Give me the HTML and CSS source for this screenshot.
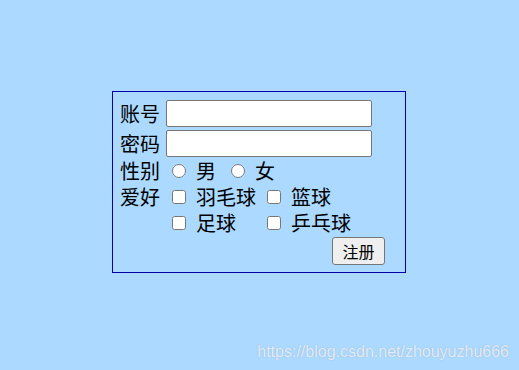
FILE: index.html
```html
<!DOCTYPE html>
<html lang="zh-CN">
<head>
  <meta charset="UTF-8">
  <meta name="viewport" content="width=device-width, initial-scale=1.0">
  <title>注册</title>
  <link rel="stylesheet" href="styles.css">
</head>
<body>
<form class="register-box">
  <div class="row field-row">
    <label class="row-label" for="account">账号</label>
    <input class="text-input" type="text" id="account">
  </div>
  <div class="row field-row">
    <label class="row-label" for="password">密码</label>
    <input class="text-input" type="password" id="password">
  </div>
  <div class="row choice-row first-choice">
    <span class="row-label">性别</span>
    <div class="radio-group">
      <label class="option"><input type="radio" name="sex"><span>男</span></label>
      <label class="option"><input type="radio" name="sex"><span>女</span></label>
    </div>
  </div>
  <div class="row hobby-row">
    <span class="row-label">爱好</span>
    <div class="hobby-grid">
      <label class="option"><input type="checkbox"><span>羽毛球</span></label>
      <label class="option"><input type="checkbox"><span>篮球</span></label>
      <label class="option"><input type="checkbox"><span>足球</span></label>
      <label class="option"><input type="checkbox"><span>乒乓球</span></label>
    </div>
  </div>
  <div class="row submit-row">
    <button type="button" class="submit-btn">注册</button>
  </div>
</form>

<div class="watermark">https://blog.csdn.net/zhouyuzhu666</div>
</body>
</html>
```

FILE: styles.css
```css
* {
  margin: 0;
  padding: 0;
  box-sizing: border-box;
}

body {
  background-color: #acd9ff;
  font-family: "Noto Sans CJK SC", "Liberation Sans", sans-serif;
  color: #000;
  padding: 91px 1px 0 0;
  min-height: 100vh;
}

.register-box {
  width: 294px;
  height: 182px;
  margin: 0 auto;
  border: 1px solid #0000a8;
  padding: 8px 7px 6px 7px;
  font-size: 20px;
}

.row {
  display: flex;
  align-items: center;
  line-height: 26px;
}

.row-label {
  width: 40px;
  flex-shrink: 0;
  margin-right: 6px;
}

.field-row {
  height: 27px;
  margin-bottom: 3px;
}

.text-input {
  width: 206px;
  height: 27px;
  border: 1px solid #767676;
  border-radius: 2px;
  background-color: #fff;
  font-size: 14px;
  padding: 0 3px;
}

.first-choice {
  margin-top: -2px;
}

.choice-row,
.hobby-row .row-label {
  height: 26px;
}

.hobby-row {
  align-items: flex-start;
}

.radio-group {
  display: flex;
  gap: 9px;
}

.option {
  display: flex;
  align-items: center;
  height: 26px;
}

.option input {
  width: 14px;
  height: 14px;
  margin: 0 10px 0 6px;
}

.hobby-grid {
  display: grid;
  grid-template-columns: 95px auto;
}

.submit-row {
  justify-content: flex-end;
  padding-top: 1px;
}

.submit-btn {
  width: 53px;
  height: 28px;
  margin-right: 13px;
  font-family: "Noto Sans CJK SC", sans-serif;
  font-size: 16px;
  line-height: 26px;
  background-color: #efefef;
  border: 1px solid #767676;
  border-radius: 3px;
  color: #000;
}

.watermark {
  position: absolute;
  right: 10px;
  bottom: 9px;
  font-family: "Liberation Sans", Arial, sans-serif;
  font-size: 16px;
  line-height: 18px;
  color: rgba(255, 255, 255, 0.75);
  text-shadow: 0 0 1px rgba(120, 140, 160, 0.6);
}
```
